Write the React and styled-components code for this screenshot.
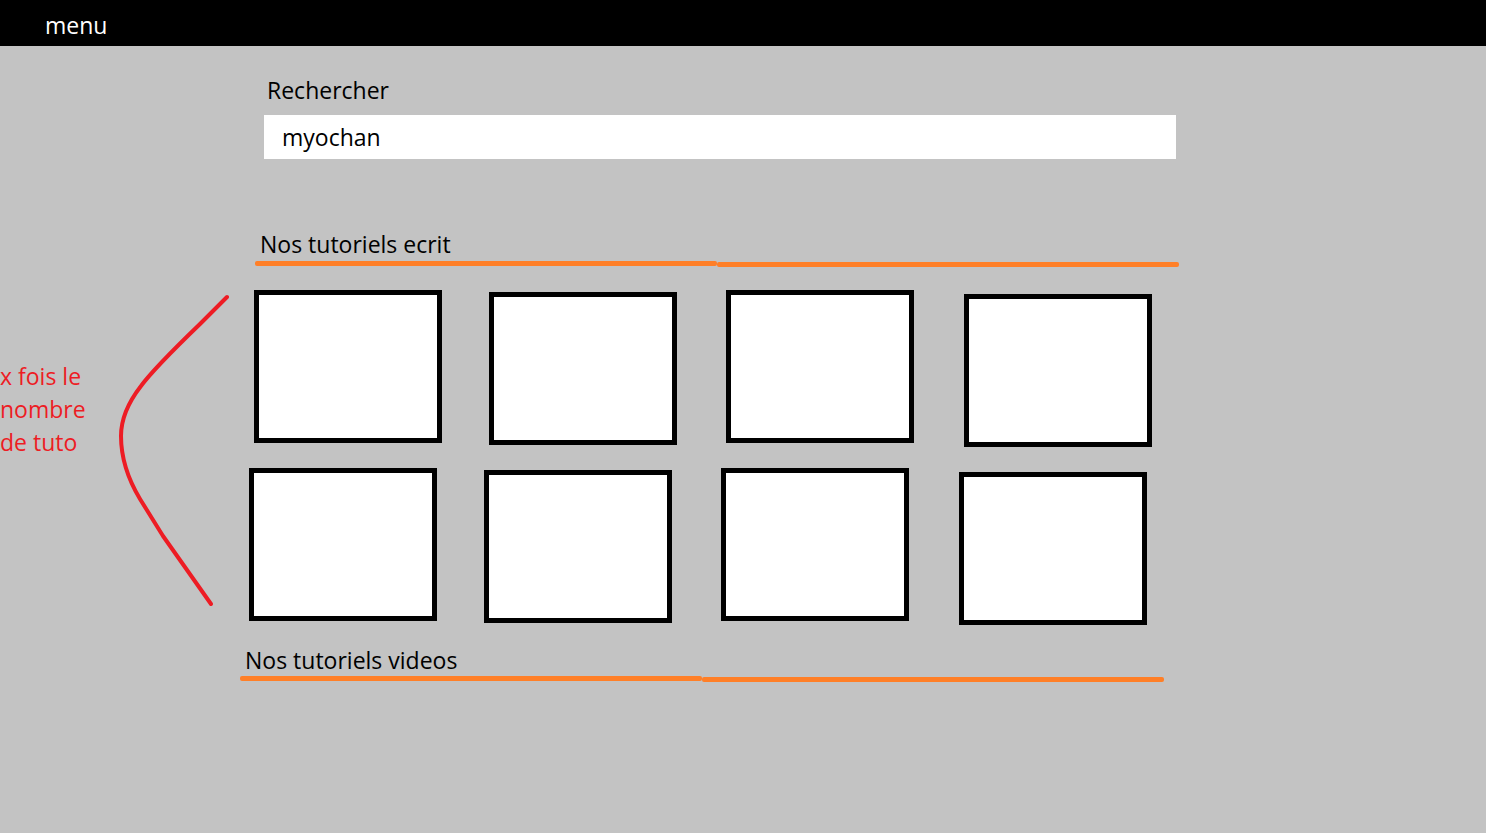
import React from "react";
import styled, { createGlobalStyle } from "styled-components";

const Global = createGlobalStyle`
  html, body { margin: 0; padding: 0; }
  body {
    background: #c3c3c3;
    font-family: "Open Sans", "Noto Sans", "Liberation Sans", sans-serif;
    width: 1486px;
    height: 833px;
    overflow: hidden;
  }
`;

const Page = styled.div`
  width: 1486px;
  height: 833px;
  background: #c3c3c3;
  display: flex;
  flex-direction: column;
`;

const TopBar = styled.header`
  height: 46px;
  background: #000;
  display: flex;
  align-items: center;
  padding-left: 45px;
  flex-shrink: 0;
`;

const MenuLabel = styled.span`
  color: #fff;
  font-size: 23px;
  line-height: 1;
  margin-top: 4px;
`;

const SearchBlock = styled.div`
  margin: 30px 0 0 264px;
  width: 912px;
  display: flex;
  flex-direction: column;
  gap: 11px;
`;

const Label = styled.label`
  font-size: 23px;
  line-height: 28px;
  color: #000;
  padding-left: 3px;
`;

const SearchInput = styled.div`
  height: 44px;
  background: #fff;
  display: flex;
  align-items: center;
  padding-left: 18px;
  font-size: 23px;
  color: #000;
`;

const SectionHead = styled.div`
  margin: ${(p) => p.$top}px 0 0 ${(p) => p.$left}px;
  width: 924px;
  display: flex;
  flex-direction: column;
  gap: ${(p) => p.$gap}px;
`;

const SectionTitle = styled.h2`
  margin: 0;
  font-weight: 400;
  font-size: 23px;
  line-height: 28px;
  color: #000;
  padding-left: 5px;
`;

const Rule = styled.div`
  display: flex;
  align-items: flex-start;
  height: 6px;
`;

const RuleSegment = styled.span`
  flex: 1;
  height: 5px;
  background: #ff7f27;
  border-radius: 2px;
  margin-top: ${(p) => p.$drop}px;
`;

const GridArea = styled.section`
  margin-top: 23px;
  display: flex;
  align-items: flex-start;
`;

const Annotation = styled.div`
  width: 249px;
  flex-shrink: 0;
  display: flex;
  align-items: flex-start;
`;

const Note = styled.p`
  margin: 70px 0 0 0;
  width: 116px;
  color: #ed1c24;
  font-size: 23px;
  line-height: 33px;
`;

const Brace = styled.svg`
  margin-top: 1px;
  width: 116px;
  height: 320px;
  display: block;
`;

const Grid = styled.div`
  display: flex;
  flex-direction: column;
`;

const CardRow = styled.div`
  display: flex;
  align-items: flex-start;
  gap: 47px;
  height: ${(p) => p.$height}px;
  margin-left: ${(p) => p.$shift}px;
`;

const Card = styled.div`
  width: 178px;
  height: 143px;
  background: #fff;
  border: 5px solid #000;
  margin-left: ${(p) => p.$dx}px;
  margin-top: ${(p) => p.$dy}px;
  flex-shrink: 0;
`;

const nudges = [
  { dx: 0, dy: 0 },
  { dx: 0, dy: 2 },
  { dx: 2, dy: 0 },
  { dx: 3, dy: 4 },
];

export default function App() {
  return (
    <>
      <Global />
      <Page>
        <TopBar>
          <MenuLabel>menu</MenuLabel>
        </TopBar>

        <SearchBlock>
          <Label>Rechercher</Label>
          <SearchInput>myochan</SearchInput>
        </SearchBlock>

        <SectionHead $top={71} $left={255} $gap={3}>
          <SectionTitle>Nos tutoriels ecrit</SectionTitle>
          <Rule>
            <RuleSegment $drop={0} />
            <RuleSegment $drop={1} />
          </Rule>
        </SectionHead>

        <GridArea>
          <Annotation>
            <Note>
              x fois le
              <br />
              nombre
              <br />
              de tuto
            </Note>
            <Brace viewBox="116 292 116 320">
              <path
                d="M227 298 L200 325 C172 352 152 372 141 387 C127 405 121 420 121 437 C121 460 128 480 140 500 L163 537 L211 605"
                fill="none"
                stroke="#ed1c24"
                strokeWidth="4"
                strokeLinecap="round"
                strokeLinejoin="round"
              />
            </Brace>
          </Annotation>
          <Grid>
            <CardRow $height={178} $shift={5}>
              {nudges.map((n, i) => (
                <Card key={i} $dx={n.dx} $dy={n.dy} />
              ))}
            </CardRow>
            <CardRow $height={157} $shift={0}>
              {nudges.map((n, i) => (
                <Card key={i} $dx={n.dx} $dy={n.dy} />
              ))}
            </CardRow>
          </Grid>
        </GridArea>

        <SectionHead $top={21} $left={240} $gap={2}>
          <SectionTitle>Nos tutoriels videos</SectionTitle>
          <Rule>
            <RuleSegment $drop={0} />
            <RuleSegment $drop={1} />
          </Rule>
        </SectionHead>
      </Page>
    </>
  );
}
